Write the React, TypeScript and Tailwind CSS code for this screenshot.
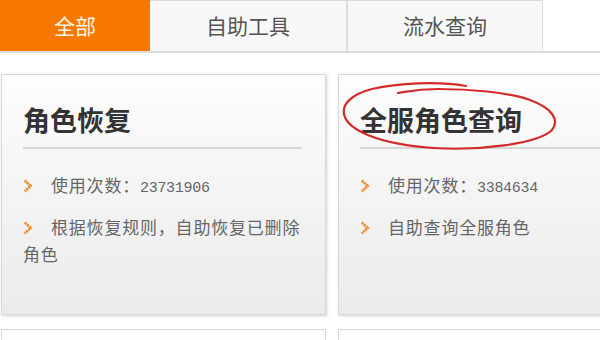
import React from 'react';

const tabs = ['全部', '自助工具', '流水查询'];

const cards = [
  { title: '角色恢复', count: '23731906', desc: '根据恢复规则，自助恢复已删除角色' },
  { title: '全服角色查询', count: '3384634', desc: '自助查询全服角色' },
];

function Chevron() {
  return (
    <svg width="10" height="14" viewBox="0 0 10 14" className="inline-block mr-[18px] -mt-[3px] align-middle">
      <path d="M1.8 1.6 L7.6 7 L1.8 12.4" fill="none" stroke="#f0892a" strokeWidth="2.8" strokeDasharray="2.2 0.7" />
    </svg>
  );
}

function Card({ title, count, desc }: { title: string; count: string; desc: string }) {
  return (
    <div className="h-[241px] border border-[#d8d8d8] bg-gradient-to-b from-[#fdfdfd] to-[#ebebeb] shadow-[1px_1px_3px_rgba(0,0,0,0.18)] pl-[21px] pr-[23px] pt-[29px]">
      <h2 className="text-[27px] leading-[32px] font-bold text-[#333] pb-[11px] border-b-2 border-[#d6d6d6] whitespace-nowrap">
        {title}
      </h2>
      <ul className="mt-[22px] text-[17px] leading-[28px] tracking-[0.8px] text-[#666] flex flex-col gap-[10px]">
        <li className="whitespace-nowrap">
          <Chevron />
          使用次数：<span className="font-['Liberation_Mono'] text-[15px] tracking-[-0.3px]">{count}</span>
        </li>
        <li className="leading-[27px]">
          <Chevron />
          {desc}
        </li>
      </ul>
    </div>
  );
}

export default function App() {
  return (
    <div className="relative w-[600px] h-[340px] overflow-hidden bg-white font-['Noto_Sans_CJK_SC','Noto_Sans',sans-serif]">
      {/* tabs */}
      <div className="flex h-[53px] border-b-2 border-[#dcdcdc]">
        {tabs.map((t, i) => (
          <div
            key={t}
            className={
              i === 0
                ? 'w-[150px] flex items-center justify-center bg-[#f77800] text-[21px] text-[#fff6e6]'
                : `${i === 1 ? 'w-[197px]' : 'w-[196px] border-l border-[#dcdcdc]'} flex items-center justify-center bg-[#f8f8f8] border-t border-r border-[#dcdcdc] text-[21px] text-[#555]`
            }
          >
            {t}
          </div>
        ))}
      </div>

      {/* cards */}
      <div className="grid grid-cols-[325px_325px] gap-x-[12px] gap-y-[14px] mt-[21px] pl-[1px]">
        {cards.map((c) => (
          <Card key={c.title} {...c} />
        ))}
        <div className="h-[241px] border border-[#d8d8d8] bg-[#fdfdfd]" />
        <div className="h-[241px] border border-[#d8d8d8] bg-[#fdfdfd]" />
      </div>

      {/* hand-drawn red circle annotation */}
      <svg className="absolute left-[338px] top-[78px] pointer-events-none" width="225" height="80" viewBox="0 0 225 80">
        <path
          d="M128 8 C100 3 60 5 34 11 C14 16 4 26 6 36 C9 52 40 66 95 70 C140 73 200 66 214 52 C222 42 214 30 192 22 C170 14 130 11 100 11 C80 11 72 13 60 15"
          fill="none"
          stroke="#d42a2a"
          strokeWidth="2.2"
          strokeLinecap="round"
        />
      </svg>
    </div>
  );
}
